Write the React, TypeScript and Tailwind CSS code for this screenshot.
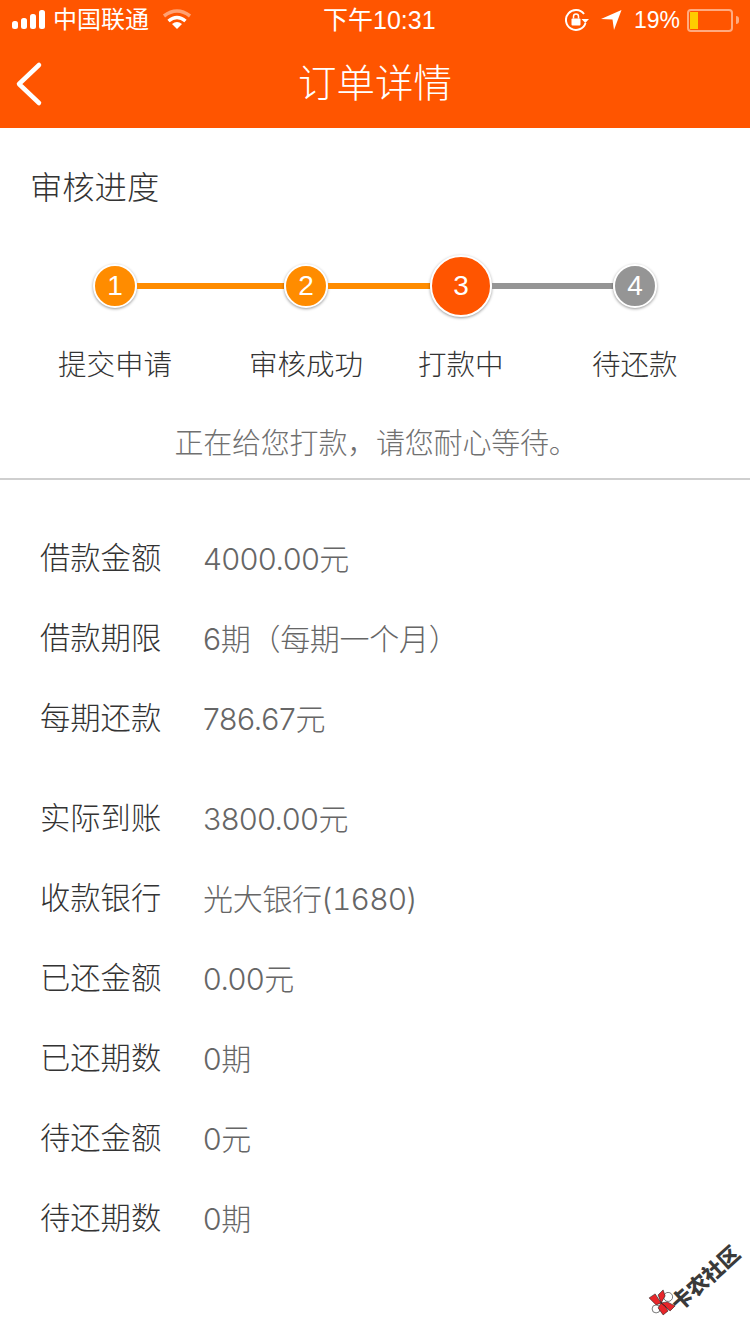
import type { ReactNode } from "react";

const font = { fontFamily: '"Liberation Sans", "Noto Sans CJK SC", sans-serif' };
const valueFont = { fontFamily: 'Inter, "Noto Sans CJK SC", sans-serif' };

function StatusBar() {
  return (
    <div className="flex h-10 items-center text-white pl-3 pr-[11px]">
      <svg width="34" height="22" viewBox="0 0 34 22" fill="white" className="mt-[-1px]">
        <rect x="0" y="12" width="6" height="8" rx="2.5" />
        <rect x="9" y="9" width="6" height="11" rx="2.5" />
        <rect x="18" y="5" width="6" height="15" rx="2.5" />
        <rect x="27" y="1" width="6" height="19" rx="2.5" />
      </svg>
      <span className="ml-[7px] text-[24px] leading-none">中国联通</span>
      <svg width="30" height="22" viewBox="0 0 30 22" className="ml-[13px]" fill="none">
        <path d="M2 7 Q15 -3 28 7" stroke="white" strokeOpacity="0.45" strokeWidth="3.5" />
        <path d="M6.500 12 Q15 5 23.500 12" stroke="white" strokeWidth="3.5" />
        <path d="M15 20 L10 15 Q15 11 20 15 Z" fill="white" />
      </svg>
      <span className="absolute left-[323px] text-[25px] leading-none">下午10:31</span>
      <div className="ml-auto flex items-center">
        <svg width="24" height="24" viewBox="0 0 24 24" fill="none" className="mr-[12px]">
          <path d="M19 6 A10 10 0 1 0 20.500 15" stroke="white" strokeWidth="2" />
          <path d="M16.500 11 L24 11 L20.300 15 Z" fill="white" />
          <rect x="6.500" y="10.500" width="9" height="7" rx="1" fill="white" />
          <path d="M8.500 10.500 V8.500 A2.500 2.500 0 0 1 13.500 8.500 V10.500" stroke="white" strokeWidth="1.5" />
        </svg>
        <svg width="21" height="21" viewBox="0 0 21 21" className="mr-[12px]">
          <path d="M0 9 L20.500 0 L13 20 L11.500 9.500 Z" fill="white" />
        </svg>
        <span className="text-[23px] leading-none">19%</span>
        <div className="ml-[7px] flex items-center">
          <div className="h-[23px] w-[46px] rounded-[4px] border-2 border-white/50 p-[1px]">
            <div className="h-full w-[8px] bg-[#ffcc00]" />
          </div>
          <div className="ml-[3px] h-[8px] w-[3px] rounded-r bg-white/50" />
        </div>
      </div>
    </div>
  );
}

function Header() {
  return (
    <div className="relative bg-[#ff5500] h-[128px]">
      <StatusBar />
      <div className="relative flex h-[88px] items-center justify-center">
        <svg width="30" height="50" viewBox="0 0 30 50" fill="none" className="absolute left-[14px] top-[19px]">
          <path d="M25 6 L5 25 L25 44" stroke="white" strokeWidth="4.5" strokeLinecap="round" strokeLinejoin="round" />
        </svg>
        <span className="text-[38.5px] leading-none text-white font-light">订单详情</span>
      </div>
    </div>
  );
}

function Dot({ n, color, big }: { n: number; color: string; big?: boolean }) {
  return (
    <div
      className={`flex shrink-0 items-center justify-center rounded-full border-2 border-white text-white shadow-[0_1px_3px_rgba(0,0,0,0.4)] ${
        big ? "h-[62px] w-[62px]" : "h-[44px] w-[44px]"
      } text-[28px]`}
      style={{ backgroundColor: color }}
    >
      {n}
    </div>
  );
}

function Steps() {
  return (
    <div className="mt-[49px]">
      <div className="flex h-[62px] items-center pl-[93px]">
        <Dot n={1} color="#ff8c00" />
        <div className="h-[6px] w-[147px] bg-[#ff8c00]" />
        <Dot n={2} color="#ff8c00" />
        <div className="h-[6px] w-[102px] bg-[#ff8c00]" />
        <Dot n={3} color="#ff5500" big />
        <div className="h-[6px] w-[121px] bg-[#959595]" />
        <Dot n={4} color="#959595" />
      </div>
      <div className="mt-[34px] flex pl-[58px] text-[28.5px] leading-none text-[#333333] font-light">
        <span className="w-[114px]">提交申请</span>
        <span className="ml-[77px] w-[114px]">审核成功</span>
        <span className="ml-[55px] w-[86px]">打款中</span>
        <span className="ml-[88px] w-[86px]">待还款</span>
      </div>
    </div>
  );
}

function Row({ label, value, extra }: { label: string; value: ReactNode; extra?: boolean }) {
  return (
    <div className={`flex h-[80px] items-center ${extra ? "mt-[20px]" : ""}`}>
      <span className="w-[163px] text-[30.3px] leading-none text-[#333333] font-light">{label}</span>
      <span className="mt-[-1px] text-[30px] leading-none text-[#666666] font-light tracking-[-0.3px]" style={valueFont}>
        {value}
      </span>
    </div>
  );
}

export default function App() {
  return (
    <div className="relative h-[1334px] w-[750px] overflow-hidden bg-white" style={font}>
      <Header />
      <h2 className="pl-[30px] pt-[42px] text-[32.3px] leading-[36px] text-[#333333] font-light">审核进度</h2>
      <Steps />
      <p className="mt-[46px] pl-[2px] text-center text-[29px] leading-[36px] tracking-[-0.2px] text-[#707070] font-light">正在给您打款，请您耐心等待。</p>
      <div className="mt-[16px] h-[2px] bg-[#cfcfcf]" />
      <div className="pl-[40px] pt-[40px]">
        <Row label="借款金额" value="4000.00元" />
        <Row label="借款期限" value="6期（每期一个月）" />
        <Row label="每期还款" value="786.67元" />
        <Row label="实际到账" value="3800.00元" extra />
        <Row
          label="收款银行"
          value={
            <>
              光大银行(<span className="tabular-nums tracking-[-0.8px]">1680</span>)
            </>
          }
        />
        <Row label="已还金额" value="0.00元" />
        <Row label="已还期数" value="0期" />
        <Row label="待还金额" value="0元" />
        <Row label="待还期数" value="0期" />
      </div>
      {/* forum watermark */}
      <div className="absolute left-[639px] top-[1250px] flex h-[76px] w-[110px] -rotate-[42deg] items-center">
        <svg width="28" height="28" viewBox="0 0 28 28" className="mb-[23px] ml-[8px] shrink-0 rotate-[42deg]">
          <circle cx="20" cy="9" r="4.5" fill="white" stroke="#555" strokeWidth="0.8" />
          <circle cx="8" cy="21" r="4" fill="white" stroke="#555" strokeWidth="0.8" />
          <path d="M13 15 L8 17 L1 10 L7 6 Z M13 15 L10 7 L15 2 L17 8 Z M13 15 L19 14 L27 18 L22 23 Z M13 15 L17 18 L20 23 L15 27 L10 20 Z" fill="#e8262a" stroke="#222" strokeWidth="0.6" />
        </svg>
        <span className="ml-[-8px] whitespace-nowrap text-[21px] font-black leading-none text-[#3a3a3a]">卡农社区</span>
      </div>
    </div>
  );
}
